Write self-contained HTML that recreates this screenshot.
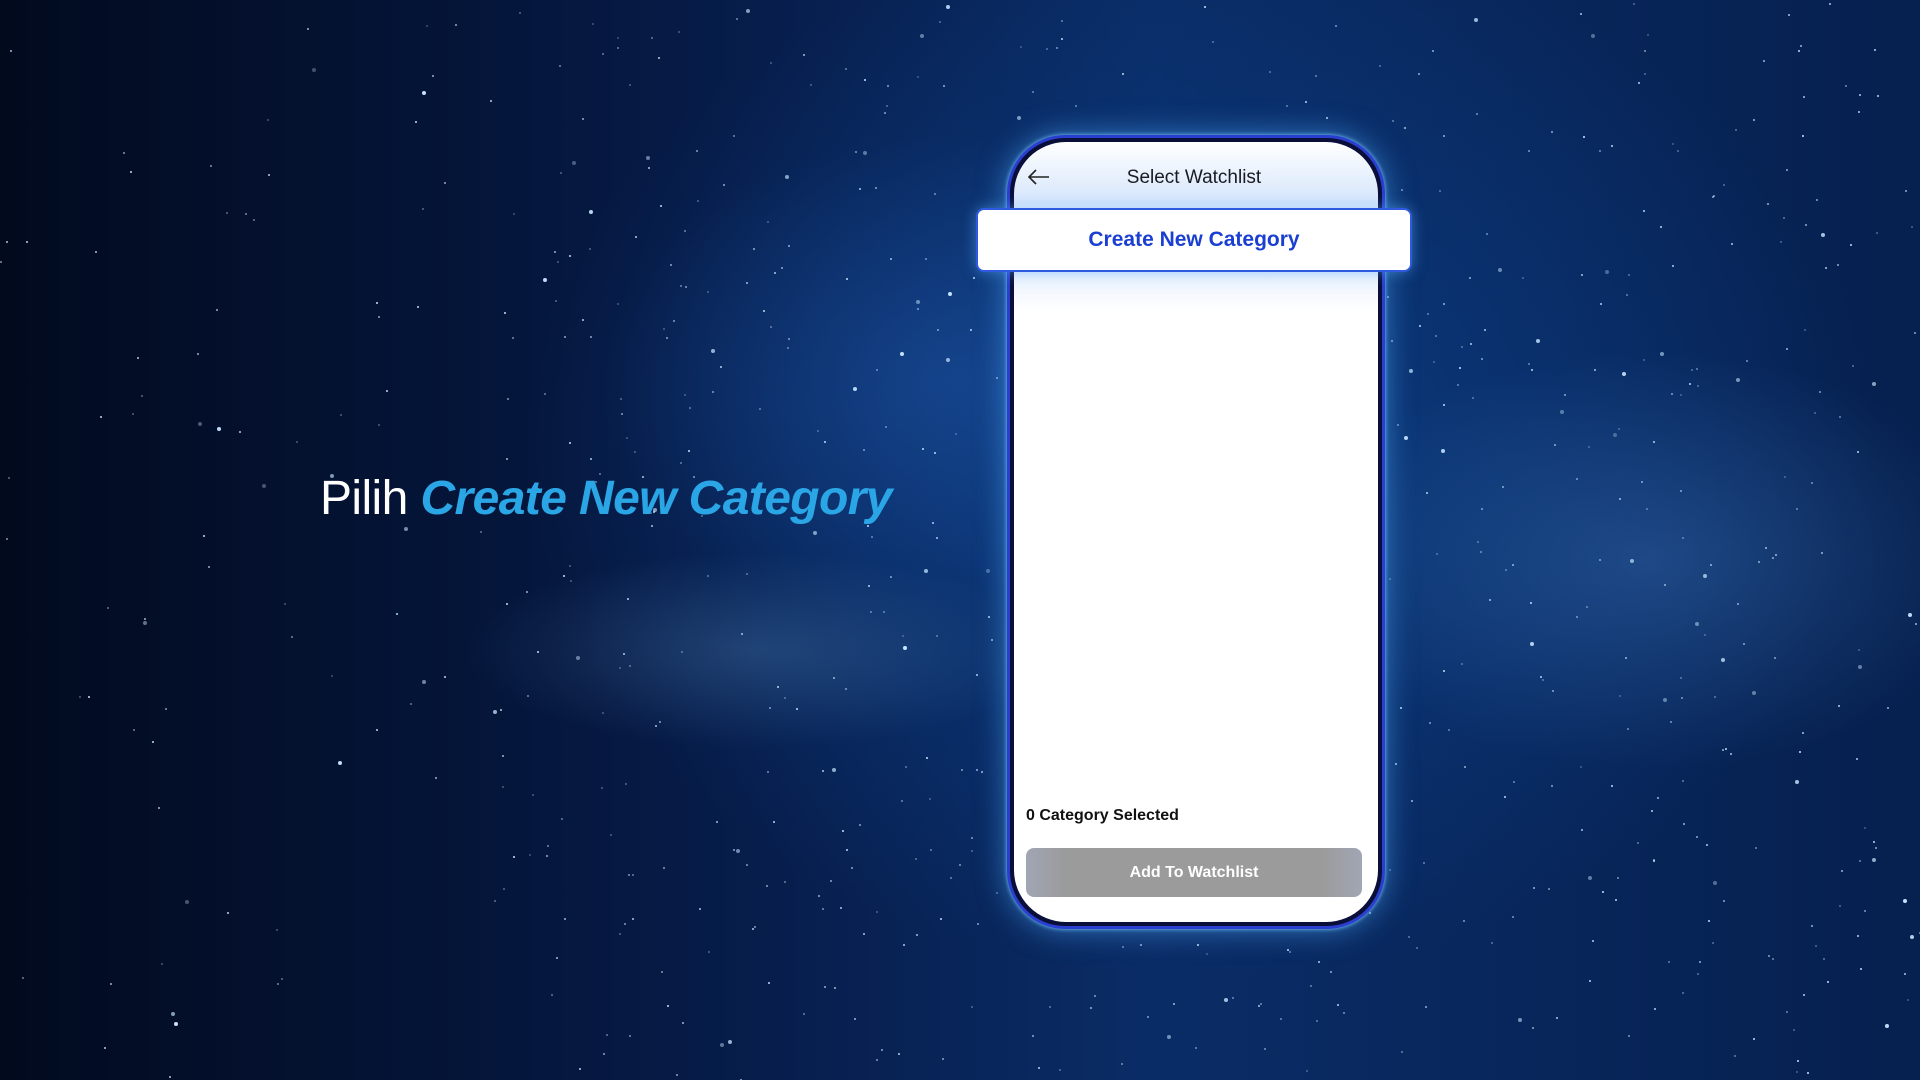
<!DOCTYPE html>
<html><head><meta charset="utf-8"><style>
*{margin:0;padding:0;box-sizing:border-box}
body{width:1920px;height:1080px;overflow:hidden;font-family:"Liberation Sans",sans-serif;
background:
radial-gradient(ellipse 500px 300px at 1650px 560px,rgba(70,130,200,.35),transparent 70%),
radial-gradient(ellipse 420px 140px at 760px 650px,rgba(90,140,190,.3),transparent 70%),
radial-gradient(ellipse 500px 350px at 950px 380px,rgba(40,100,190,.35),transparent 70%),
radial-gradient(ellipse 900px 700px at 1200px 450px,#0b3a7e,transparent 75%),
linear-gradient(90deg,#020a1e 0%,#061a45 35%,#0a2c66 60%,#06204f 100%);}
.stars{position:absolute;left:0;top:0;width:2px;height:2px;border-radius:50%;background:transparent}
.headline{position:absolute;left:320px;top:471px;font-size:48px;color:#fff;white-space:nowrap;letter-spacing:-.6px}
.headline .l{font-weight:300}
.headline b{color:#2aa6e6;font-style:italic;font-weight:700}
.phone{position:absolute;left:1007px;top:135px;width:378px;height:794px;border-radius:58px;background:#0a0f3a;
border:3px solid #2a3fd0;box-shadow:0 0 30px rgba(80,170,255,.6),0 0 4px #7fd0ff}
.screen{position:absolute;left:4px;top:4px;right:4px;bottom:4px;border-radius:52px;overflow:hidden;
background:linear-gradient(#fff 0,#d6e6fb 60px,#fff 72px,#fff 80px,#d6e6fb 100px,#fff 170px,#fff 100%)}
.title{position:absolute;top:25px;width:100%;text-align:center;font-size:19px;color:#1a1a22;padding-right:4px}
.back{position:absolute;left:14px;top:27px}
.card{position:absolute;left:976px;top:208px;width:436px;height:64px;background:#fff;border-radius:8px;border:2px solid #2f5ae0;
box-shadow:0 0 14px rgba(90,170,255,.55);text-align:center;line-height:60px;font-size:21px;font-weight:bold;color:#1a3fd2}
.sel{position:absolute;left:12px;top:665px;font-size:16px;font-weight:bold;color:#111}
.btn{position:absolute;left:12px;right:16px;top:706px;height:49px;border-radius:8px;background:linear-gradient(90deg,#a0a6b4,#9b9b9b 12%,#9b9b9b 88%,#a0a6b4);
color:#fff;text-align:center;line-height:49px;font-size:16px;font-weight:bold}
</style></head><body>
<div class="headline"><span class="l">Pilih</span> <b>Create New Category</b></div>
<div class="phone"><div class="screen">
<svg class="back" width="22" height="16" viewBox="0 0 22 16"><path d="M21 8H2M8 1L1 8l7 7" fill="none" stroke="#222" stroke-width="1.6"/></svg>
<div class="title">Select Watchlist</div>
<div class="sel">0 Category Selected</div>
<div class="btn">Add To Watchlist</div>
</div></div>
<div class="card">Create New Category</div>
<script>
var sh=[],r=12345;function rnd(){r=(r*16807)%2147483647;return r/2147483647}
for(var i=0;i<900;i++){var x=rnd()*1920,y=rnd()*1080;if(x<500&&rnd()<.6)continue;var a=(0.3+rnd()*.7).toFixed(2);var s=rnd()<.1?1:0;sh.push(x.toFixed(0)+'px '+y.toFixed(0)+'px 0 '+s+'px rgba(200,230,255,'+a+')')}
var d=document.createElement('div');d.className='stars';d.style.boxShadow=sh.join(',');document.body.insertBefore(d,document.body.firstChild);
</script>
</body></html>
